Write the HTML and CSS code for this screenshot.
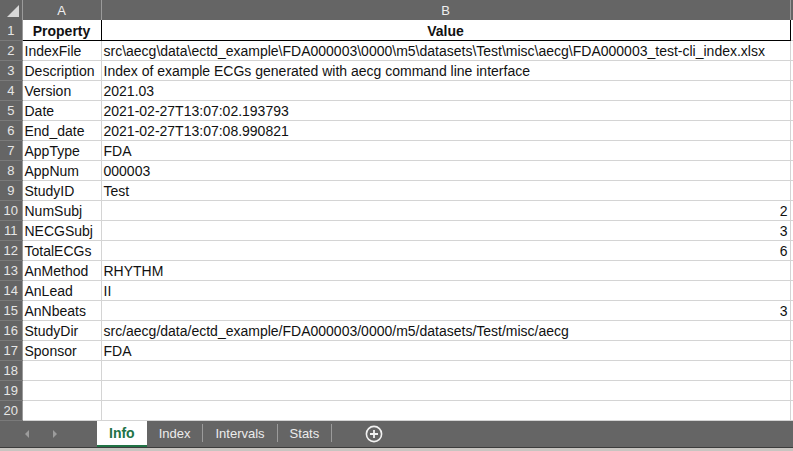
FILE: index.html
```html
<!DOCTYPE html>
<html>
<head>
<meta charset="utf-8">
<link rel="stylesheet" href="styles.css">
</head>
<body>
<div class="sheet">
  <table class="grid">
    <colgroup>
      <col class="c-num"><col class="c-a"><col class="c-b"><col class="c-c">
    </colgroup>
    <thead>
      <tr class="hdr">
        <th class="corner"><svg class="corner-tri" width="22" height="20" viewBox="0 0 22 20"><polygon points="7,17 19,17 19,5" fill="#d8d8d8"/></svg></th>
        <th class="colh">A</th>
        <th class="colh">B</th>
        <th class="colh"></th>
      </tr>
    </thead>
    <tbody>
      <tr><th class="rn">1</th><td class="b1 bold ctr">Property</td><td class="b1 b1r bold ctr">Value</td><td></td></tr>
      <tr><th class="rn">2</th><td>IndexFile</td><td>src\aecg\data\ectd_example\FDA000003\0000\m5\datasets\Test\misc\aecg\FDA000003_test-cli_index.xlsx</td><td></td></tr>
      <tr><th class="rn">3</th><td>Description</td><td>Index of example ECGs generated with aecg command line interface</td><td></td></tr>
      <tr><th class="rn">4</th><td>Version</td><td>2021.03</td><td></td></tr>
      <tr><th class="rn">5</th><td>Date</td><td>2021-02-27T13:07:02.193793</td><td></td></tr>
      <tr><th class="rn">6</th><td>End_date</td><td>2021-02-27T13:07:08.990821</td><td></td></tr>
      <tr><th class="rn">7</th><td>AppType</td><td>FDA</td><td></td></tr>
      <tr><th class="rn">8</th><td>AppNum</td><td>000003</td><td></td></tr>
      <tr><th class="rn">9</th><td>StudyID</td><td>Test</td><td></td></tr>
      <tr><th class="rn">10</th><td>NumSubj</td><td class="num">2</td><td></td></tr>
      <tr><th class="rn">11</th><td>NECGSubj</td><td class="num">3</td><td></td></tr>
      <tr><th class="rn">12</th><td>TotalECGs</td><td class="num">6</td><td></td></tr>
      <tr><th class="rn">13</th><td>AnMethod</td><td>RHYTHM</td><td></td></tr>
      <tr><th class="rn">14</th><td>AnLead</td><td>II</td><td></td></tr>
      <tr><th class="rn">15</th><td>AnNbeats</td><td class="num">3</td><td></td></tr>
      <tr><th class="rn">16</th><td>StudyDir</td><td>src/aecg/data/ectd_example/FDA000003/0000/m5/datasets/Test/misc/aecg</td><td></td></tr>
      <tr><th class="rn">17</th><td>Sponsor</td><td>FDA</td><td></td></tr>
      <tr><th class="rn">18</th><td></td><td></td><td></td></tr>
      <tr><th class="rn">19</th><td></td><td></td><td></td></tr>
      <tr><th class="rn">20</th><td></td><td></td><td></td></tr>
    </tbody>
  </table>
  <div class="tabbar">
    <div class="nav">
      <svg width="10" height="10" viewBox="0 0 10 10"><polygon points="7,1 7,9 3,5" fill="#9c9c9c"/></svg>
      <svg width="10" height="10" viewBox="0 0 10 10"><polygon points="3,1 3,9 7,5" fill="#9c9c9c"/></svg>
    </div>
    <div class="tab active">Info</div>
    <div class="tab">Index</div>
    <div class="sep"></div>
    <div class="tab">Intervals</div>
    <div class="sep"></div>
    <div class="tab">Stats</div>
    <div class="sep"></div>
    <div class="add">
      <svg width="18" height="18" viewBox="0 0 18 18"><circle cx="9" cy="9" r="7.6" fill="none" stroke="#f2f2f2" stroke-width="1.6"/><path d="M9 5v8M5 9h8" stroke="#f2f2f2" stroke-width="1.8"/></svg>
    </div>
  </div>
  <div class="status"></div>
</div>
</body>
</html>
```
FILE: styles.css
```css
html, body {
  margin: 0;
  padding: 0;
  background: #ffffff;
  overflow: hidden;
}
.sheet {
  width: 793px;
  height: 451px;
  overflow: hidden;
  font-family: "Liberation Sans", Arial, sans-serif;
  font-size: 14px;
  color: #111111;
}
.grid {
  border-collapse: collapse;
  table-layout: fixed;
  width: 820px;
}
.c-num { width: 22px; }
.c-a { width: 79px; }
.c-b { width: 689px; }
.c-c { width: 30px; }
.grid tr { height: 20px; }
.grid th, .grid td {
  height: 20px;
  padding: 0 2px 0 2px;
  box-sizing: border-box;
  white-space: nowrap;
  overflow: visible;
  line-height: 18px;
  vertical-align: bottom;
}
.grid td {
  border-top: none;
  border-left: none;
  border-right: 1px solid #d4d4d4;
  border-bottom: 1px solid #d4d4d4;
}
.hdr th {
  background: #656565;
  color: #efefef;
  font-weight: normal;
  font-size: 13px;
  border-right: 1px solid #9b9b9b;
  border-bottom: none;
  padding: 0;
  line-height: 19px;
  vertical-align: middle;
}
.corner-tri { display: block; }
.rn {
  background: #656565;
  color: #e6e6e6;
  font-weight: normal;
  font-size: 13px;
  text-align: center;
  border-right: 1px solid #9b9b9b;
  border-bottom: 1px solid #7a7a7a;
  padding: 0;
}
.bold { font-weight: bold; }
.ctr { text-align: center; }
.num { text-align: right; }
.grid td.b1 {
  border-bottom: 1px solid #000;
  border-right: 1px solid #000;
}
.tabbar {
  height: 26px;
  background: #656565;
  display: flex;
  align-items: stretch;
  border-bottom: 1px solid #3c3c3c;
}
.nav {
  width: 97px;
  display: flex;
  align-items: center;
  gap: 18px;
  padding-left: 22px;
  box-sizing: border-box;
}
.nav svg { display: block; }
.tab {
  padding: 0 12px;
  color: #ececec;
  font-size: 13px;
  display: flex;
  align-items: center;
}
.tab.active {
  background: #ffffff;
  color: #217346;
  font-weight: bold;
  font-size: 14px;
  border-bottom: 2px solid #217346;
  padding-top: 1px;
}
.sep {
  width: 1px;
  background: #9b9b9b;
  margin: 3px 0 5px;
}
.add {
  display: flex;
  align-items: center;
  padding-left: 33px;
}
.add svg { display: block; }
.status {
  height: 4px;
  background: #c8c5c1;
}
```
